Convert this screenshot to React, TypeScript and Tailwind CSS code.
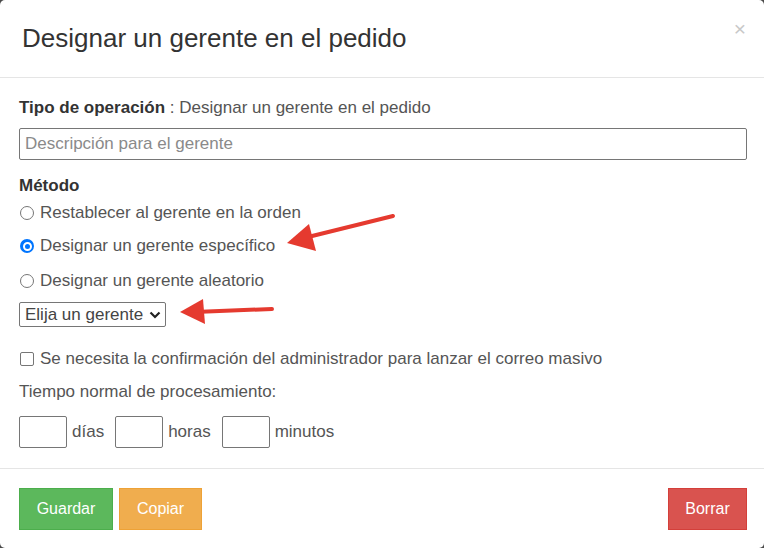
import React from "react";

const font = { fontFamily: '"Liberation Sans", Arial, sans-serif' };

function Radio({ checked, label }: { checked?: boolean; label: string }) {
  return (
    <label className="flex h-5 items-center gap-[6px] text-[17px] text-[#555]">
      <span
        className={
          checked
            ? "ml-px flex h-[14px] w-[14px] items-center justify-center rounded-full bg-[#0075ff]"
            : "ml-px h-[14px] w-[14px] rounded-full border border-[#767676] bg-white"
        }
      >
        {checked && <span className="h-[9px] w-[9px] rounded-full border-[2px] border-white bg-[#0075ff]" />}
      </span>
      <span>{label}</span>
    </label>
  );
}

function TimeBox({ unit }: { unit: string }) {
  return (
    <div className="flex items-center gap-[5px]">
      <div className="h-[32px] w-12 rounded-[2px] border border-[#767676] bg-white" />
      <span className="text-[17px] text-[#555]">{unit}</span>
    </div>
  );
}

export default function App() {
  return (
    <div className="relative h-[548px] w-[764px] overflow-hidden bg-[#4a4a4a]" style={font}>
      <div className="flex h-full w-full flex-col rounded-[5px] bg-white">
        {/* header */}
        <div className="relative flex h-[78px] items-center border-b border-[#e5e5e5] pl-[22px]">
          <h4 className="text-[26px] font-light text-[#333]">Designar un gerente en el pedido</h4>
          <span className="absolute right-[18px] top-[13px] text-[21px] text-[#c8c8c8]">×</span>
        </div>

        {/* body */}
        <div className="flex flex-col border-b border-[#e5e5e5] pb-5 pl-[19px] pr-[17px] pt-5">
          <div className="h-5 text-[17px] leading-5 text-[#555]">
            <b className="text-[#333]">Tipo de operación</b> : Designar un gerente en el pedido
          </div>
          <div className="mt-[10px] flex h-[32px] items-center rounded-[2px] border border-[#767676] px-[5px] text-[17px] text-[#8a8a8a]">
            Descripción para el gerente
          </div>
          <div className="mt-4 h-5 text-[17px] font-bold leading-5 text-[#333]">Método</div>
          <div className="mt-[7px] flex flex-col gap-[13px]">
            <Radio label="Restablecer al gerente en la orden" />
            <Radio checked label="Designar un gerente específico" />
            <div className="mt-[2px]">
              <Radio label="Designar un gerente aleatorio" />
            </div>
          </div>
          <div className="mt-[11px] flex h-[25px] w-[147px] items-center justify-between rounded-[2px] border border-[#767676] pl-[5px] pr-[4px] text-[17px] text-[#444]">
            <span>Elija un gerente</span>
            <svg width="12" height="8" viewBox="0 0 12 8">
              <path d="M1.5 1.5 L6 6 L10.5 1.5" fill="none" stroke="#222" strokeWidth="2.2" />
            </svg>
          </div>
          <label className="mt-[22px] flex h-5 items-center gap-[6px] text-[17px] text-[#555]">
            <span className="ml-px h-[14px] w-[14px] rounded-[2px] border border-[#767676] bg-white" />
            <span>Se necesita la confirmación del administrador para lanzar el correo masivo</span>
          </label>
          <div className="mt-[13px] h-5 text-[17px] leading-5 text-[#555]">Tiempo normal de procesamiento:</div>
          <div className="mt-[14px] flex items-center gap-[11px]">
            <TimeBox unit="días" />
            <TimeBox unit="horas" />
            <TimeBox unit="minutos" />
          </div>
        </div>

        {/* footer */}
        <div className="flex items-start justify-between pl-[19px] pr-[17px] pt-[19px]">
          <div className="flex gap-[6px]">
            <button className="h-[42px] w-[94px] border border-[#4cae4c] bg-[#5cb85c] text-[16px] text-white">Guardar</button>
            <button className="h-[42px] w-[83px] border border-[#eea236] bg-[#f0ad4e] text-[16px] text-white">Copiar</button>
          </div>
          <button className="h-[42px] w-[79px] border border-[#d43f3a] bg-[#d9534f] text-[16px] text-white">Borrar</button>
        </div>
      </div>

      {/* annotation arrows */}
      <svg className="pointer-events-none absolute left-0 top-0" width="764" height="548">
        <line x1="393" y1="216" x2="300" y2="239" stroke="#e53a2f" strokeWidth="4" strokeLinecap="round" />
        <polygon points="287,243 309,224 316,251" fill="#e53a2f" />
        <line x1="272" y1="309" x2="195" y2="312" stroke="#e53a2f" strokeWidth="4" strokeLinecap="round" />
        <polygon points="180,312 203,299 205,324" fill="#e53a2f" />
      </svg>
    </div>
  );
}
